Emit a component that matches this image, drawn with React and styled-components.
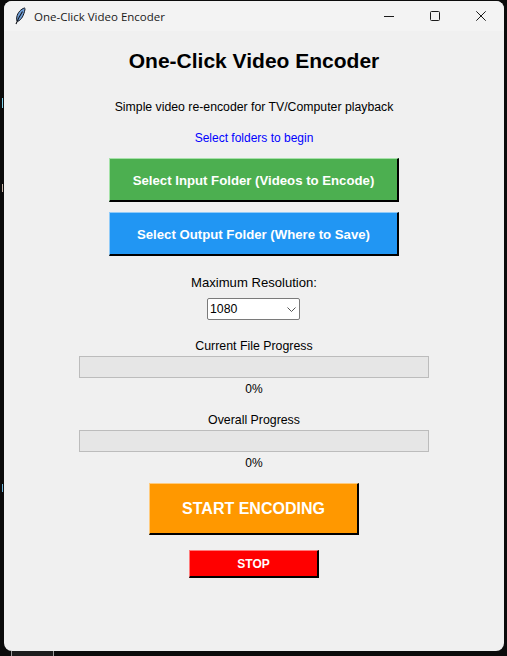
import React from 'react';
import styled, { createGlobalStyle } from 'styled-components';

const GlobalStyle = createGlobalStyle`
  html, body {
    margin: 0;
    padding: 0;
    height: 656px;
    overflow: hidden;
    background: #0b0b0b;
  }
`;

const Screen = styled.div`
  position: relative;
  width: 507px;
  height: 656px;
  padding: 1px 3px 5px 4px;
  box-sizing: border-box;
`;

// bits of the desktop that show around the window
const DesktopMark = styled.div`
  position: absolute;
  left: ${p => p.$x}px;
  top: ${p => p.$y}px;
  width: ${p => p.$w}px;
  height: ${p => p.$h}px;
  background: ${p => p.$color};
`;

const DesktopIconEdge = styled.div`
  position: absolute;
  left: 11px;
  top: 651px;
  width: 43px;
  height: 5px;
  box-sizing: border-box;
  background: #1d1d1d;
  border-left: 1px solid #9a9a9a;
  border-right: 1px solid #9a9a9a;
`;

const Window = styled.div`
  height: 100%;
  display: flex;
  flex-direction: column;
  background: #f0f0f0;
  border-radius: 8px;
  overflow: hidden;
  font-family: "Liberation Sans", Arial, sans-serif;
  color: #000;
`;

const TitleBar = styled.div`
  height: 30px;
  flex: none;
  display: flex;
  align-items: center;
  background: #f3f3f3;
  padding-left: 10px;
`;

const AppIcon = styled.svg`
  width: 12px;
  height: 18px;
  margin-right: 8px;
`;

const TitleText = styled.span`
  flex: 1;
  font-family: "Open Sans", "Noto Sans", sans-serif;
  font-size: 11.5px;
  color: #1a1a1a;
`;

const CaptionButton = styled.div`
  width: 46px;
  height: 30px;
  display: flex;
  align-items: center;
  justify-content: center;
`;

const Content = styled.div`
  flex: 1;
  display: flex;
  flex-direction: column;
  align-items: center;
  padding-top: 18px;
`;

const Heading = styled.h1`
  margin: 0;
  height: 24px;
  line-height: 24px;
  font-size: 21px;
  font-weight: 700;
`;

const Line = styled.div`
  height: 16px;
  line-height: 16px;
  font-size: ${p => p.$size || 12}px;
  color: ${p => p.$color || '#000'};
  margin-top: ${p => p.$top || 0}px;
`;

const RaisedButton = styled.button`
  display: block;
  box-sizing: border-box;
  width: ${p => p.$w}px;
  height: ${p => p.$h}px;
  margin: ${p => p.$top}px 0 0;
  padding: ${p => p.$nudge || 0}px 0 0;
  background: ${p => p.$bg};
  color: #fff;
  font-family: inherit;
  font-weight: 700;
  font-size: ${p => p.$size}px;
  border-style: solid;
  border-width: 1px 2px 2px 1px;
  border-color: ${p => p.$light} #000 #000 ${p => p.$light};
  border-radius: 0;
  cursor: pointer;
`;

const SelectWrap = styled.div`
  position: relative;
  width: 93px;
  height: 22px;
  margin: 7px 1px 0 0;
`;

const Select = styled.select`
  width: 100%;
  height: 100%;
  box-sizing: border-box;
  appearance: none;
  background: #fff;
  border: 1px solid #7a7a7a;
  border-radius: 2px;
  padding: 0 0 0 2px;
  font-family: inherit;
  font-size: 12.3px;
  color: #000;
  outline: none;
`;

const Chevron = styled.svg`
  position: absolute;
  right: 4px;
  top: 9px;
  width: 9px;
  height: 5px;
  pointer-events: none;
`;

const ProgressTrack = styled.div`
  box-sizing: border-box;
  width: 350px;
  height: 22px;
  margin-top: 2px;
  background: #e6e6e6;
  border: 1px solid #bcbcbc;
`;

const ProgressFill = styled.div`
  height: 100%;
  background: #06b025;
`;

function ProgressBlock({ label, value, top }) {
  return (
    <>
      <Line $top={top} $size={12.35}>{label}</Line>
      <ProgressTrack>
        <ProgressFill style={{ width: `${value}%` }} />
      </ProgressTrack>
      <Line $top={3}>{value}%</Line>
    </>
  );
}

export default function App() {
  return (
    <Screen>
      <GlobalStyle />
      <DesktopMark $x={2} $y={98} $w={1} $h={10} $color="#7fd0e8" />
      <DesktopMark $x={2} $y={184} $w={1} $h={8} $color="#c9b6a8" />
      <DesktopMark $x={2} $y={484} $w={1} $h={8} $color="#6fb4d8" />
      <DesktopIconEdge />
      <Window>
        <TitleBar>
          <AppIcon viewBox="0 0 12 18">
            <path d="M10.5 1C7 2 3.6 5.5 2.8 10c-.3 1.6-.2 3 .2 4l1 .2C7.4 13 10 8 11 2.2 11.1 1.6 11 1.2 10.5 1z" fill="#6f9fd8" stroke="#10131a" strokeWidth="1" />
            <path d="M8.5 4.5C6.5 7.5 4 12 2 17" fill="none" stroke="#10131a" strokeWidth="1.1" />
          </AppIcon>
          <TitleText>One-Click Video Encoder</TitleText>
          <CaptionButton>
            <svg width="10" height="10" viewBox="0 0 10 10"><path d="M0 5.5h10" stroke="#1a1a1a" strokeWidth="1" /></svg>
          </CaptionButton>
          <CaptionButton>
            <svg width="10" height="10" viewBox="0 0 10 10"><rect x=".5" y=".5" width="9" height="9" rx="1" fill="none" stroke="#1a1a1a" strokeWidth="1" /></svg>
          </CaptionButton>
          <CaptionButton>
            <svg width="10" height="10" viewBox="0 0 10 10"><path d="M.3.3l9.4 9.4M9.7.3L.3 9.7" stroke="#1a1a1a" strokeWidth="1" /></svg>
          </CaptionButton>
        </TitleBar>
        <Content>
          <Heading>One-Click Video Encoder</Heading>
          <Line $top={26} $size={12.27}>Simple video re-encoder for TV/Computer playback</Line>
          <Line $top={15} $color="#0000ff">Select folders to begin</Line>
          <RaisedButton $w={290} $h={44} $top={12} $nudge={2} $bg="#4caf50" $light="#a5e2a8" $size={13.2}>
            Select Input Folder (Videos to Encode)
          </RaisedButton>
          <RaisedButton $w={290} $h={44} $top={10} $nudge={2} $bg="#2196f3" $light="#90cbf9" $size={13.2}>
            Select Output Folder (Where to Save)
          </RaisedButton>
          <Line $top={19} $size={13.1}>Maximum Resolution:</Line>
          <SelectWrap>
            <Select defaultValue="1080">
              <option>720</option>
              <option>1080</option>
              <option>1440</option>
              <option>2160</option>
            </Select>
            <Chevron viewBox="0 0 9 5">
              <path d="M.5.5l4 4 4-4" fill="none" stroke="#555" strokeWidth="1" />
            </Chevron>
          </SelectWrap>
          <ProgressBlock label="Current File Progress" value={0} top={18} />
          <ProgressBlock label="Overall Progress" value={0} top={15} />
          <RaisedButton $w={210} $h={52} $top={12} $bg="#ff9800" $light="#ffcb7e" $size={16}>
            START ENCODING
          </RaisedButton>
          <RaisedButton $w={130} $h={28} $top={15} $nudge={1} $bg="#ff0000" $light="#ff7a7a" $size={12}>
            STOP
          </RaisedButton>
        </Content>
      </Window>
    </Screen>
  );
}
